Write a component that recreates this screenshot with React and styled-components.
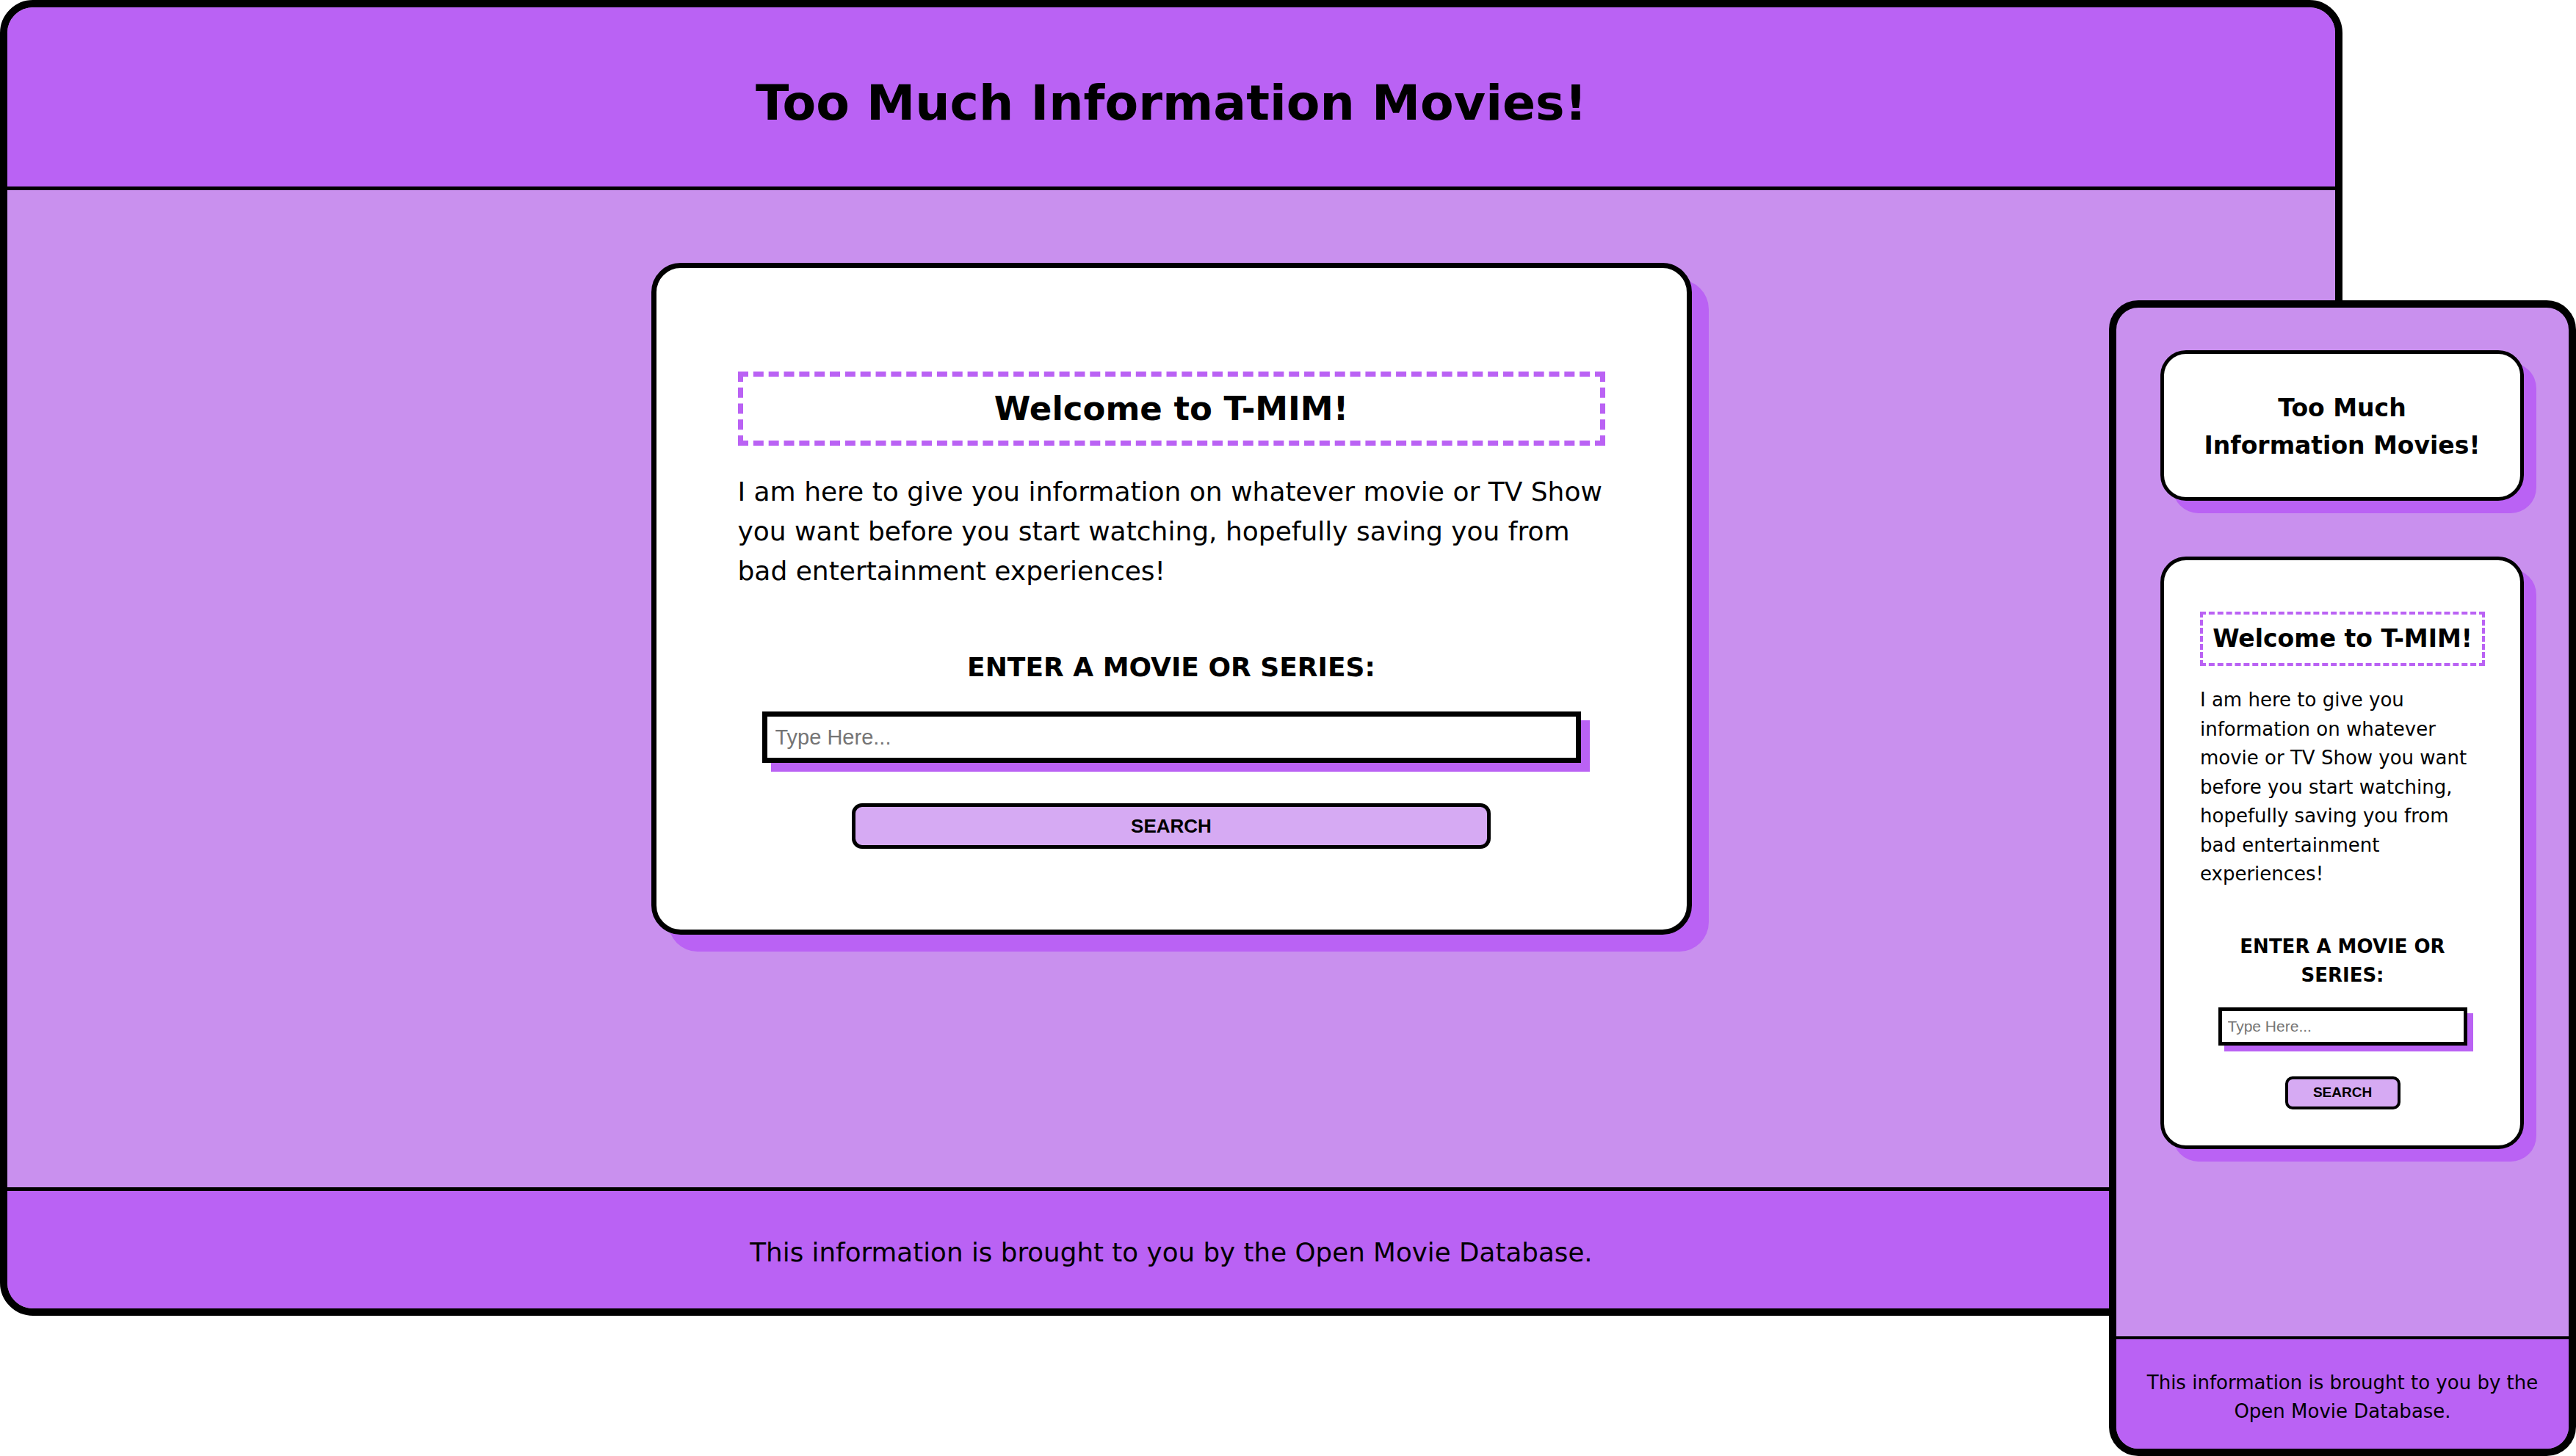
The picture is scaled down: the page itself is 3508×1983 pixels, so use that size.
import React from "react";
import styled, { createGlobalStyle } from "styled-components";

const C = {
  deep: "#ba62f4",
  soft: "#c990ee",
  btn: "#d6aaf3",
  ink: "#000000",
};

const GlobalStyle = createGlobalStyle`
  html, body {
    margin: 0;
    padding: 0;
    background: #ffffff;
  }
  body {
    width: 3508px;
    height: 1983px;
    overflow: hidden;
    font-family: "DejaVu Sans", Verdana, sans-serif;
    color: #000;
  }
  *, *::before, *::after {
    box-sizing: border-box;
  }
`;

const Stage = styled.div`
  position: relative;
  width: 3508px;
  height: 1983px;
  background: #ffffff;
  overflow: hidden;
`;

/* ---------- device windows (free canvas) ---------- */

const DesktopFrame = styled.div`
  position: absolute;
  left: 0;
  top: 0;
  width: 3190px;
  height: 1792px;
  border: 10px solid ${C.ink};
  border-radius: 45px;
  overflow: hidden;
  display: flex;
  flex-direction: column;
  background: ${C.soft};
`;

const PhoneFrame = styled.div`
  position: absolute;
  left: 2872px;
  top: 409px;
  width: 636px;
  height: 1574px;
  border: 10px solid ${C.ink};
  border-radius: 40px;
  overflow: hidden;
  display: flex;
  flex-direction: column;
  background: ${C.soft};
`;

/* ---------- bars ---------- */

const TopBar = styled.header`
  flex: none;
  height: 249px;
  background: ${C.deep};
  border-bottom: 5px solid ${C.ink};
  display: flex;
  align-items: center;
  justify-content: center;
  padding-top: 17px;
`;

const SiteTitle = styled.h1`
  margin: 0;
  font-size: ${(p) => (p.$compact ? 33 : 66.5)}px;
  line-height: ${(p) => (p.$compact ? "51px" : "1.2")};
  font-weight: 700;
  text-align: center;
`;

const DesktopMain = styled.main`
  flex: 1;
  display: flex;
  justify-content: center;
  align-items: flex-start;
  padding-top: 99px;
`;

const PhoneMain = styled.main`
  flex: 1;
  display: flex;
  flex-direction: column;
  padding: 58px 61px 0 60px;
`;

const BottomBar = styled.footer`
  flex: none;
  height: ${(p) => (p.$compact ? 153 : 165)}px;
  background: ${C.deep};
  border-top: ${(p) => (p.$compact ? 4 : 5)}px solid ${C.ink};
  display: flex;
  align-items: center;
  justify-content: center;
  padding: ${(p) => (p.$compact ? "8px 20px 0" : "8px 40px 0")};
  text-align: center;
  font-size: ${(p) => (p.$compact ? 26 : 35.7)}px;
  line-height: ${(p) => (p.$compact ? 39 : 54)}px;
`;

/* ---------- cards ---------- */

const TitleCard = styled.div`
  flex: none;
  height: 205px;
  background: #fff;
  border: 5px solid ${C.ink};
  border-radius: 35px;
  box-shadow: 17px 17px 0 ${C.deep};
  display: flex;
  align-items: center;
  justify-content: center;
  padding: 2px 20px 0;
`;

const SearchCard = styled.section`
  flex: none;
  width: ${(p) => (p.$compact ? "auto" : "1417px")};
  margin-top: ${(p) => (p.$compact ? 76 : 0)}px;
  background: #fff;
  border: ${(p) => (p.$compact ? 5 : 7)}px solid ${C.ink};
  border-radius: ${(p) => (p.$compact ? 35 : 40)}px;
  box-shadow: ${(p) => (p.$compact ? "17px 17px 0" : "23px 23px 0")} ${C.deep};
  padding: ${(p) =>
    p.$compact ? "70px 48px 49px 49px" : "141px 111px 110px 111px"};
  display: flex;
  flex-direction: column;
`;

const WelcomeBox = styled.div`
  height: ${(p) => (p.$compact ? 74 : 101)}px;
  border: ${(p) => (p.$compact ? 4 : 7)}px dashed ${C.deep};
  display: flex;
  align-items: center;
  justify-content: center;
`;

const WelcomeText = styled.h2`
  margin: 0;
  font-size: ${(p) => (p.$compact ? 33 : 45)}px;
  font-weight: 700;
  line-height: 1.2;
  white-space: nowrap;
`;

const Intro = styled.p`
  margin: ${(p) => (p.$compact ? 27 : 36)}px 0 0;
  font-size: ${(p) => (p.$compact ? 26 : 36)}px;
  line-height: ${(p) => (p.$compact ? 39.5 : 54)}px;
`;

const PromptLabel = styled.h3`
  margin: ${(p) => (p.$compact ? 59 : 77)}px 0 0;
  font-size: ${(p) => (p.$compact ? 26 : 36)}px;
  line-height: ${(p) => (p.$compact ? 39 : 54)}px;
  font-weight: 700;
  text-align: center;
  text-transform: uppercase;
`;

const SearchInput = styled.input`
  align-self: center;
  width: ${(p) => (p.$compact ? 339 : 1115)}px;
  height: ${(p) => (p.$compact ? 52 : 70)}px;
  margin-top: ${(p) => (p.$compact ? 24 : 33)}px;
  border: ${(p) => (p.$compact ? 5 : 7)}px solid ${C.ink};
  border-radius: 0;
  box-shadow: ${(p) => (p.$compact ? "8px 8px 0" : "12px 12px 0")} ${C.deep};
  padding: 0 ${(p) => (p.$compact ? 8 : 11)}px;
  font-family: "Liberation Sans", Arial, sans-serif;
  font-size: ${(p) => (p.$compact ? 21 : 29)}px;
  background: #fff;
  outline: none;
  &::placeholder {
    color: #757575;
  }
`;

const SearchButton = styled.button`
  align-self: center;
  width: ${(p) => (p.$compact ? 157 : 870)}px;
  height: ${(p) => (p.$compact ? 45 : 62)}px;
  margin-top: ${(p) => (p.$compact ? 42 : 55)}px;
  border: ${(p) => (p.$compact ? 4 : 5)}px solid ${C.ink};
  border-radius: ${(p) => (p.$compact ? 10 : 14)}px;
  background: ${C.btn};
  color: #000;
  font-family: "Liberation Sans", Arial, sans-serif;
  font-weight: 700;
  font-size: ${(p) => (p.$compact ? 19 : 26)}px;
  padding: 0;
  cursor: pointer;
`;

const INTRO =
  "I am here to give you information on whatever movie or TV Show you want before you start watching, hopefully saving you from bad entertainment experiences!";
const FOOT = "This information is brought to you by the Open Movie Database.";

function Search({ compact }) {
  return (
    <SearchCard $compact={compact}>
      <WelcomeBox $compact={compact}>
        <WelcomeText $compact={compact}>Welcome to T-MIM!</WelcomeText>
      </WelcomeBox>
      <Intro $compact={compact}>{INTRO}</Intro>
      <PromptLabel $compact={compact}>Enter a Movie or Series:</PromptLabel>
      <SearchInput $compact={compact} type="text" placeholder="Type Here..." />
      <SearchButton $compact={compact}>SEARCH</SearchButton>
    </SearchCard>
  );
}

export default function App() {
  return (
    <>
      <GlobalStyle />
      <Stage>
        <DesktopFrame>
          <TopBar>
            <SiteTitle>Too Much Information Movies!</SiteTitle>
          </TopBar>
          <DesktopMain>
            <Search />
          </DesktopMain>
          <BottomBar>{FOOT}</BottomBar>
        </DesktopFrame>

        <PhoneFrame>
          <PhoneMain>
            <TitleCard>
              <SiteTitle $compact>
                Too Much
                <br />
                Information Movies!
              </SiteTitle>
            </TitleCard>
            <Search compact />
          </PhoneMain>
          <BottomBar $compact>{FOOT}</BottomBar>
        </PhoneFrame>
      </Stage>
    </>
  );
}
